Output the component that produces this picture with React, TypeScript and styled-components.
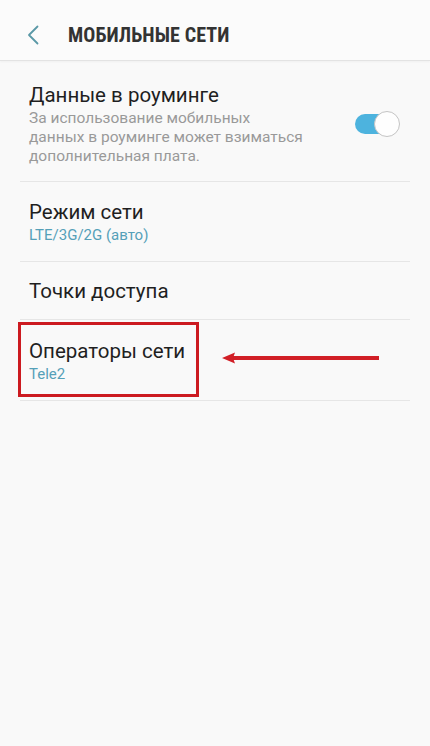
import React from 'react';
import styled, { createGlobalStyle } from 'styled-components';

const GlobalStyle = createGlobalStyle`
  html, body {
    margin: 0;
    padding: 0;
    background: #f9f9f9;
  }
  body {
    font-family: Roboto, 'Noto Sans', sans-serif;
    -webkit-font-smoothing: antialiased;
  }
`;

const Screen = styled.div`
  width: 430px;
  min-height: 746px;
  background: #f9f9f9;
  overflow: hidden;
`;

const Header = styled.header`
  display: flex;
  align-items: center;
  height: 61px;
  padding: 10px 0 0 27px;
  box-sizing: border-box;
  background: #fbfbfb;
  border-bottom: 1px solid #e3e3e3;
  box-shadow: 0 1px 2px rgba(0, 0, 0, 0.04);
`;

const BackButton = styled.button`
  display: flex;
  align-items: center;
  justify-content: center;
  padding: 0;
  margin: 0 29px 0 0;
  width: 12px;
  height: 20px;
  border: none;
  background: none;
  cursor: pointer;
`;

const Title = styled.h1`
  margin: 0;
  font-family: 'Liberation Sans Narrow', 'Roboto Condensed', Roboto, sans-serif;
  font-weight: 700;
  font-size: 20px;
  letter-spacing: 0.1px;
  color: #333333;
`;

const List = styled.div`
  display: flex;
  flex-direction: column;
`;

const Row = styled.div<{ $top?: number; $bottom?: number }>`
  position: relative;
  display: flex;
  align-items: center;
  justify-content: space-between;
  margin: 0 20px;
  padding: ${({ $top = 16, $bottom = 16 }) => `${$top}px 10px ${$bottom}px 9px`};
  border-bottom: 1px solid #e6e6e6;
`;

const TextBlock = styled.div`
  display: flex;
  flex-direction: column;
`;

const ItemTitle = styled.div`
  font-size: 20.5px;
  line-height: 28px;
  color: #1f1f1f;
`;

const ItemNote = styled.div`
  font-size: 15.5px;
  line-height: 19px;
  color: #999999;
`;

const ItemValue = styled.div`
  font-size: 15px;
  line-height: 19px;
  color: #55a0b8;
`;

const Switch = styled.div<{ $on: boolean }>`
  position: relative;
  width: 45px;
  height: 26px;
  flex-shrink: 0;

  &::before {
    content: '';
    position: absolute;
    left: 0;
    top: 3px;
    width: 43px;
    height: 20px;
    border-radius: 10px;
    background: ${({ $on }) => ($on ? '#4db3de' : '#c8c8c8')};
  }

  &::after {
    content: '';
    position: absolute;
    top: 0;
    ${({ $on }) => ($on ? 'right: 0;' : 'left: 0;')}
    width: 24px;
    height: 24px;
    border-radius: 50%;
    background: #fefefe;
    border: 1px solid #c4c4c4;
  }
`;

const Highlight = styled.div`
  position: absolute;
  left: -2px;
  top: 2px;
  width: 181px;
  height: 75px;
  box-sizing: border-box;
  border: 3px solid #cc1a20;
  pointer-events: none;
`;

const Pointer = styled.svg`
  position: absolute;
  left: 202px;
  top: 32px;
  pointer-events: none;
`;

const ChevronLeft = () => (
  <svg width="12" height="20" viewBox="0 0 12 20" fill="none">
    <path d="M10.5 1.5 L2 10 L10.5 18.5" stroke="#5a98a6" strokeWidth="1.8" strokeLinecap="round" strokeLinejoin="round" />
  </svg>
);

export default function App() {
  return (
    <Screen>
      <GlobalStyle />
      <Header>
        <BackButton aria-label="Назад">
          <ChevronLeft />
        </BackButton>
        <Title>МОБИЛЬНЫЕ СЕТИ</Title>
      </Header>
      <List>
        <Row $top={20} $bottom={15}>
          <TextBlock>
            <ItemTitle>Данные в роуминге</ItemTitle>
            <ItemNote>
              За использование мобильных
              <br />
              данных в роуминге может взиматься
              <br />
              дополнительная плата.
            </ItemNote>
          </TextBlock>
          <Switch $on />
        </Row>
        <Row>
          <TextBlock>
            <ItemTitle>Режим сети</ItemTitle>
            <ItemValue>LTE/3G/2G (авто)</ItemValue>
          </TextBlock>
        </Row>
        <Row $top={15} $bottom={14}>
          <TextBlock>
            <ItemTitle>Точки доступа</ItemTitle>
          </TextBlock>
        </Row>
        <Row $top={17}>
          <TextBlock>
            <ItemTitle>Операторы сети</ItemTitle>
            <ItemValue>Tele2</ItemValue>
          </TextBlock>
          <Highlight />
          <Pointer width="158" height="12" viewBox="0 0 158 12">
            <line x1="10" y1="6" x2="157" y2="6" stroke="#d11f26" strokeWidth="4" />
            <path d="M0 6 L13 0.5 L11 6 L13 11.5 Z" fill="#d11f26" />
          </Pointer>
        </Row>
      </List>
    </Screen>
  );
}
